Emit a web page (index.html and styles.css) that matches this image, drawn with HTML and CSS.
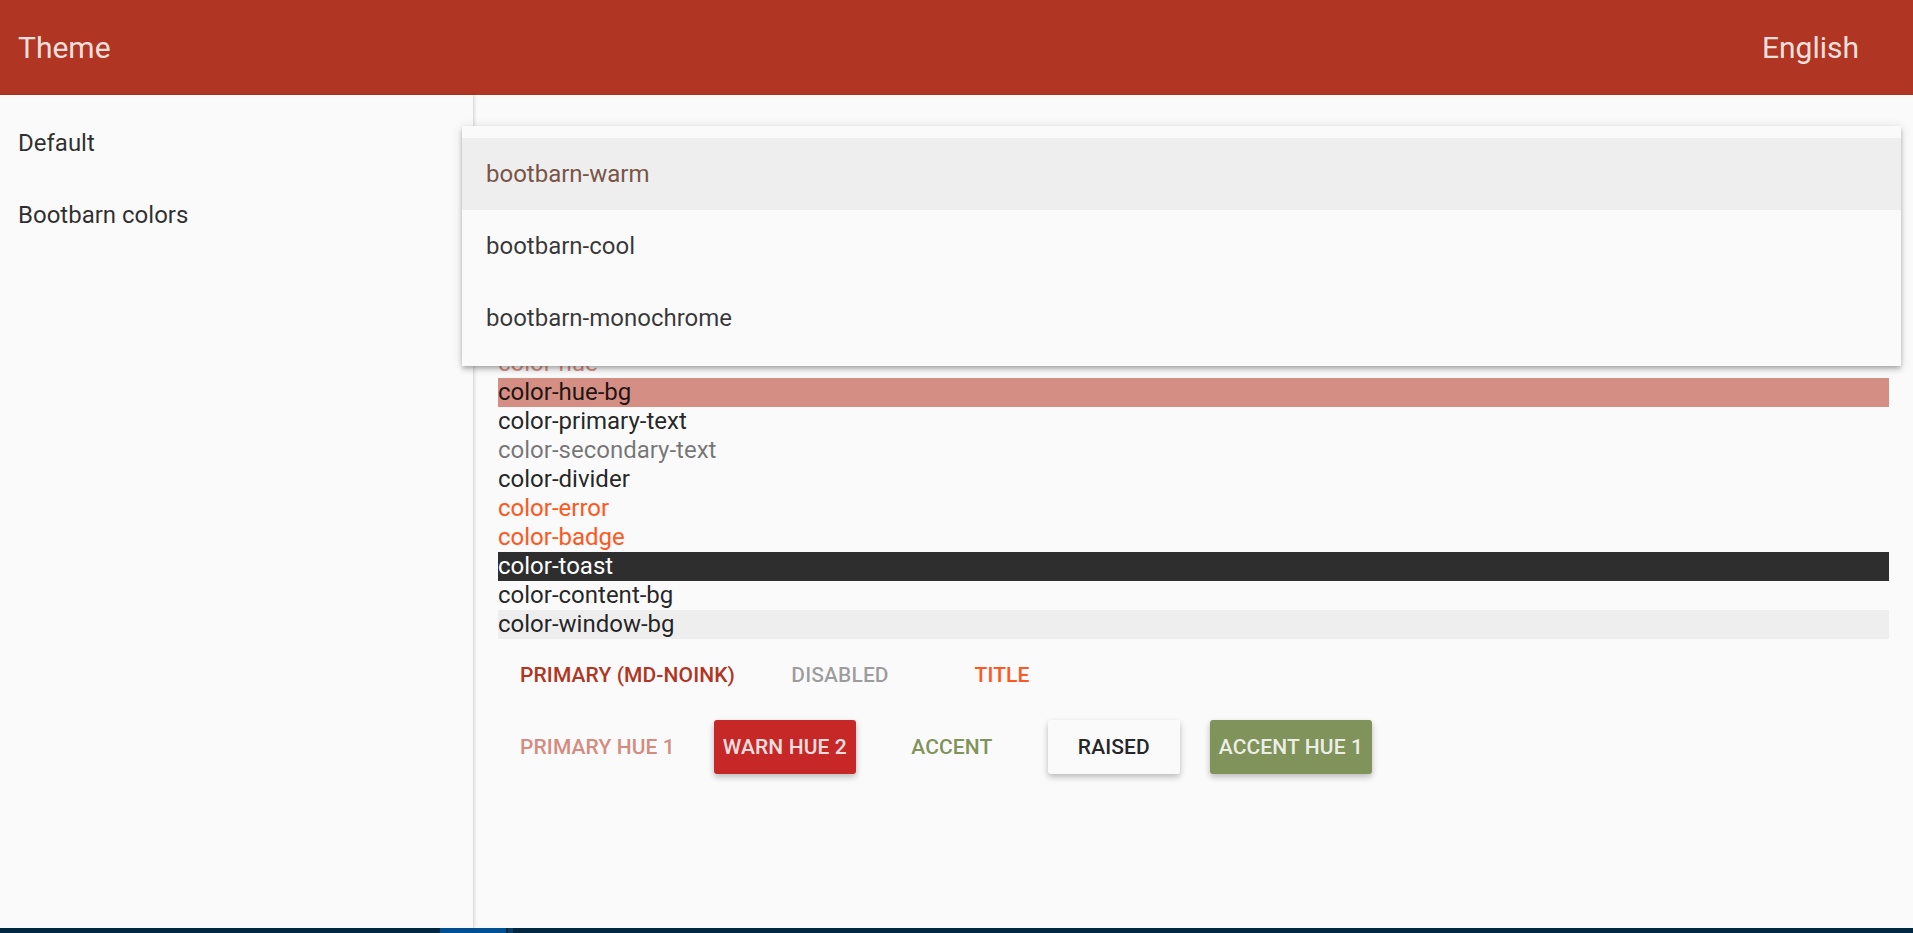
FILE: index.html
```html
<!DOCTYPE html>
<html lang="en">
<head>
<meta charset="utf-8">
<title>Theme</title>
<link rel="stylesheet" href="styles.css">
</head>
<body>
<div class="app">
  <header class="toolbar">
    <h1 class="toolbar-title">Theme</h1>
    <span class="toolbar-lang">English</span>
  </header>
  <div class="layout">
    <nav class="sidenav">
      <ul class="nav-list">
        <li class="nav-item">Default</li>
        <li class="nav-item">Bootbarn colors</li>
      </ul>
    </nav>
    <main class="content">
      <div class="swatches">
        <div class="swatch sw-hue">color-hue</div>
        <div class="swatch sw-hue-bg">color-hue-bg</div>
        <div class="swatch sw-primary-text">color-primary-text</div>
        <div class="swatch sw-secondary-text">color-secondary-text</div>
        <div class="swatch sw-divider">color-divider</div>
        <div class="swatch sw-error">color-error</div>
        <div class="swatch sw-badge">color-badge</div>
        <div class="swatch sw-toast">color-toast</div>
        <div class="swatch sw-content-bg">color-content-bg</div>
        <div class="swatch sw-window-bg">color-window-bg</div>
      </div>
      <div class="button-row">
        <button class="btn btn-primary">Primary (md-noink)</button>
        <button class="btn btn-disabled" disabled>Disabled</button>
        <button class="btn btn-title">Title</button>
      </div>
      <div class="button-row">
        <button class="btn btn-primary-hue">Primary Hue 1</button>
        <button class="btn btn-raised btn-warn">Warn Hue 2</button>
        <button class="btn btn-accent">Accent</button>
        <button class="btn btn-raised btn-plain">Raised</button>
        <button class="btn btn-raised btn-accent-hue">Accent Hue 1</button>
      </div>

      <div class="select-menu">
        <div class="option option-selected">bootbarn-warm</div>
        <div class="option">bootbarn-cool</div>
        <div class="option">bootbarn-monochrome</div>
      </div>
    </main>
  </div>
  <div class="taskbar">
    <span class="task task-active"></span>
    <span class="task task-edge"></span>
  </div>
</div>
</body>
</html>
```

FILE: styles.css
```css
* { box-sizing: border-box; }

html, body {
  margin: 0;
  padding: 0;
  height: 100%;
}

body {
  font-family: Roboto, "Liberation Sans", Arial, sans-serif;
  background: #fafafa;
  color: rgba(0, 0, 0, 0.87);
  overflow: hidden;
}

.app {
  display: flex;
  flex-direction: column;
  height: 933px;
}

/* Toolbar */
.toolbar {
  flex: 0 0 95px;
  height: 95px;
  background: #b03522;
  color: rgba(255, 255, 255, 0.87);
  display: flex;
  align-items: center;
  justify-content: space-between;
  padding: 0 54px 0 18px;
}

.toolbar-title {
  margin: 0;
  font-size: 30px;
  font-weight: 400;
  line-height: 36px;
}

.toolbar-lang {
  font-size: 30px;
  line-height: 36px;
}

/* Layout */
.layout {
  flex: 1 1 auto;
  display: flex;
  min-height: 0;
}

.sidenav {
  flex: 0 0 474px;
  width: 474px;
  background: #fafafa;
  border-right: 1px solid #dedede;
  box-shadow: 1px 0 3px rgba(0, 0, 0, 0.10);
  position: relative;
  z-index: 1;
}

.nav-list {
  list-style: none;
  margin: 0;
  padding: 12px 0 0;
}

.nav-item {
  height: 72px;
  line-height: 72px;
  padding-left: 18px;
  font-size: 24px;
  color: rgba(0, 0, 0, 0.82);
}

/* Content */
.content {
  flex: 1 1 auto;
  position: relative;
  padding: 254px 24px 0;
}

.swatch {
  font-size: 24px;
  line-height: 29px;
  height: 29px;
  color: rgba(0, 0, 0, 0.87);
  white-space: nowrap;
}

.sw-hue { color: #d48c80; }
.sw-hue-bg { background: #d48e83; }
.sw-secondary-text { color: rgba(0, 0, 0, 0.54); }
.sw-error, .sw-badge { color: #ff5722; }
.sw-toast { background: #2e2e2e; color: #ffffff; }
.sw-content-bg { background: #fafafa; }
.sw-window-bg { background: #eeeeee; }

/* Buttons */
.button-row {
  display: flex;
  align-items: center;
  margin-left: -2px;
}

.btn {
  margin: 9px 15px;
  min-width: 132px;
  height: 54px;
  line-height: 54px;
  padding: 0 9px;
  border: 0;
  border-radius: 3px;
  background: transparent;
  font-family: Roboto, "Liberation Sans", Arial, sans-serif;
  font-size: 21px;
  font-weight: 500;
  letter-spacing: 0.005em;
  text-transform: uppercase;
  text-align: center;
  white-space: nowrap;
  cursor: pointer;
}

.btn-primary { color: #b03522; }
.btn-disabled { color: rgba(0, 0, 0, 0.38); cursor: default; }
.btn-title { color: #ff5722; }
.btn-primary-hue { color: #d48c80; }
.btn-accent { color: #7f935a; }

.btn-raised {
  box-shadow: 0 3px 6px 0 rgba(0, 0, 0, 0.26);
}

.btn-warn {
  background: #c62828;
  color: rgba(255, 255, 255, 0.87);
}

.btn-plain {
  background: #fafafa;
  color: rgba(0, 0, 0, 0.87);
}

.btn-accent-hue {
  background: #80935a;
  color: rgba(255, 255, 255, 0.87);
}

/* Select menu overlay */
.select-menu {
  position: absolute;
  top: 31px;
  left: -12px;
  width: 1439px;
  padding: 12px 0;
  background: #fafafa;
  box-shadow: 0 2px 4px -1px rgba(0, 0, 0, 0.2),
              0 4px 5px 0 rgba(0, 0, 0, 0.14),
              0 1px 10px 0 rgba(0, 0, 0, 0.12);
  z-index: 5;
}

.option {
  height: 72px;
  line-height: 72px;
  padding-left: 24px;
  font-size: 24px;
  color: rgba(0, 0, 0, 0.78);
}

.option-selected {
  background: #eeeeee;
  color: #795548;
}

/* Bottom strip */
.taskbar {
  flex: 0 0 5px;
  height: 5px;
  background: #022741;
  display: flex;
  padding-left: 440px;
}

.task-active {
  width: 66px;
  background: #005092;
}

.task-edge {
  width: 5px;
  margin-left: 2px;
  background: #0b3d66;
}
```
